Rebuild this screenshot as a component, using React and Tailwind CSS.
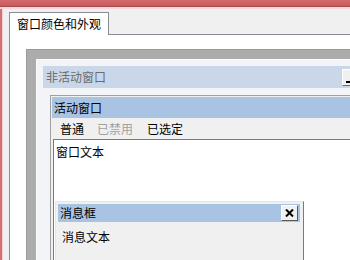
function CloseButton() {
  return (
    <div className="w-[17px] h-[16px] mr-[2px] flex items-center justify-center bg-[#f0f0f0] border border-t-white border-l-white border-b-[#5a5a5a] border-r-[#5a5a5a]">
      <svg width="9" height="8" viewBox="0 0 9 8">
        <path d="M1 0.5 L8 7.5 M8 0.5 L1 7.5" stroke="#000" strokeWidth="2" />
      </svg>
    </div>
  )
}

function MinButton() {
  return (
    <div className="w-[17px] h-[17px] shrink-0 flex items-end bg-[#f0f0f0] border border-t-white border-l-white border-b-[#6a6a6a] border-r-[#6a6a6a] pl-[3px] pb-[2px]">
      <div className="w-[6px] h-[2px] bg-black" />
    </div>
  )
}

export default function App() {
  return (
    <div className="w-[350px] h-[260px] overflow-hidden bg-[#f0f0f0] flex flex-col text-[12px] leading-[16px] text-black font-['Noto_Sans_CJK_SC',sans-serif]">
      {/* window frame edge */}
      <div className="h-[6px] shrink-0 bg-gradient-to-b from-[#d36b6d] to-[#c85a5c]" />
      <div className="h-[1px] shrink-0 bg-[#a34c4e]" />
      <div className="h-[2px] shrink-0 bg-[#f6d9d9]" />

      <div className="flex flex-1 min-h-0">
        <div className="w-[2px] shrink-0 bg-[#d27072]" />
        <div className="w-[1px] shrink-0 bg-[#f2cfcf]" />

        <div className="flex-1 flex flex-col pl-[6px] pt-[3px] min-w-0">
          {/* tab header */}
          <div className="flex h-[23px] shrink-0">
            <div className="w-[100px] h-[23px] bg-white border border-b-0 border-[#898c95] pl-[7px] flex items-center">
              窗口颜色和外观
            </div>
            <div className="flex-1 border-b border-[#898c95]" />
          </div>

          {/* tab page */}
          <div className="flex-1 bg-white border-l border-[#898c95] pl-[16px] pt-[14px] overflow-hidden">
            {/* preview desktop */}
            <div className="w-[360px] h-[260px] bg-[#acacac] border-l border-t border-[#9a9a9a] pl-[9px] pt-[9px]">
              {/* inactive window */}
              <div className="w-[360px] h-[250px] bg-[#f3f4f8] border-l border-t border-[#fbfbfb] pl-[6px] pt-[6px]">
                <div className="h-[22px] bg-[#c9d7e8] flex items-center">
                  <div className="w-[299px] pl-[3px] text-[#6d6d6d]">非活动窗口</div>
                  <MinButton />
                </div>

                {/* active window */}
                <div className="mt-[7px] ml-[7px] w-[320px] h-[200px] bg-[#f0f0f0] border-l border-t border-[#a0a0a0] pl-[1px] pt-[1px]">
                  <div className="h-[21px] bg-[#a9c3e3] flex items-center pl-[2px]">活动窗口</div>
                  <div className="h-[21px] bg-[#f0f0f0] flex items-center pl-[8px]">
                    <span>普通</span>
                    <span className="ml-[13px] text-[#a0a0a0]">已禁用</span>
                    <span className="ml-[14px]">已选定</span>
                  </div>

                  {/* client area */}
                  <div className="ml-[1px] h-[140px] bg-white border-l border-t border-[#7a7a7a] pt-[4px]">
                    <div className="pl-[2px]">窗口文本</div>

                    {/* message box */}
                    <div className="mt-[41px] ml-[1px] w-[249px] h-[80px] bg-[#f0f0f0] border-l border-t border-[#e6e6e6] border-r border-r-[#7a7a7a] pl-[2px] pt-[2px] pr-[3px]">
                      <div className="h-[18px] bg-[#a9c3e3] flex items-center justify-between">
                        <span className="pl-[2px]">消息框</span>
                        <CloseButton />
                      </div>
                      <div className="pl-[4px] pt-[7px]">消息文本</div>
                    </div>
                  </div>
                </div>
              </div>
            </div>
          </div>
        </div>
      </div>
    </div>
  )
}
